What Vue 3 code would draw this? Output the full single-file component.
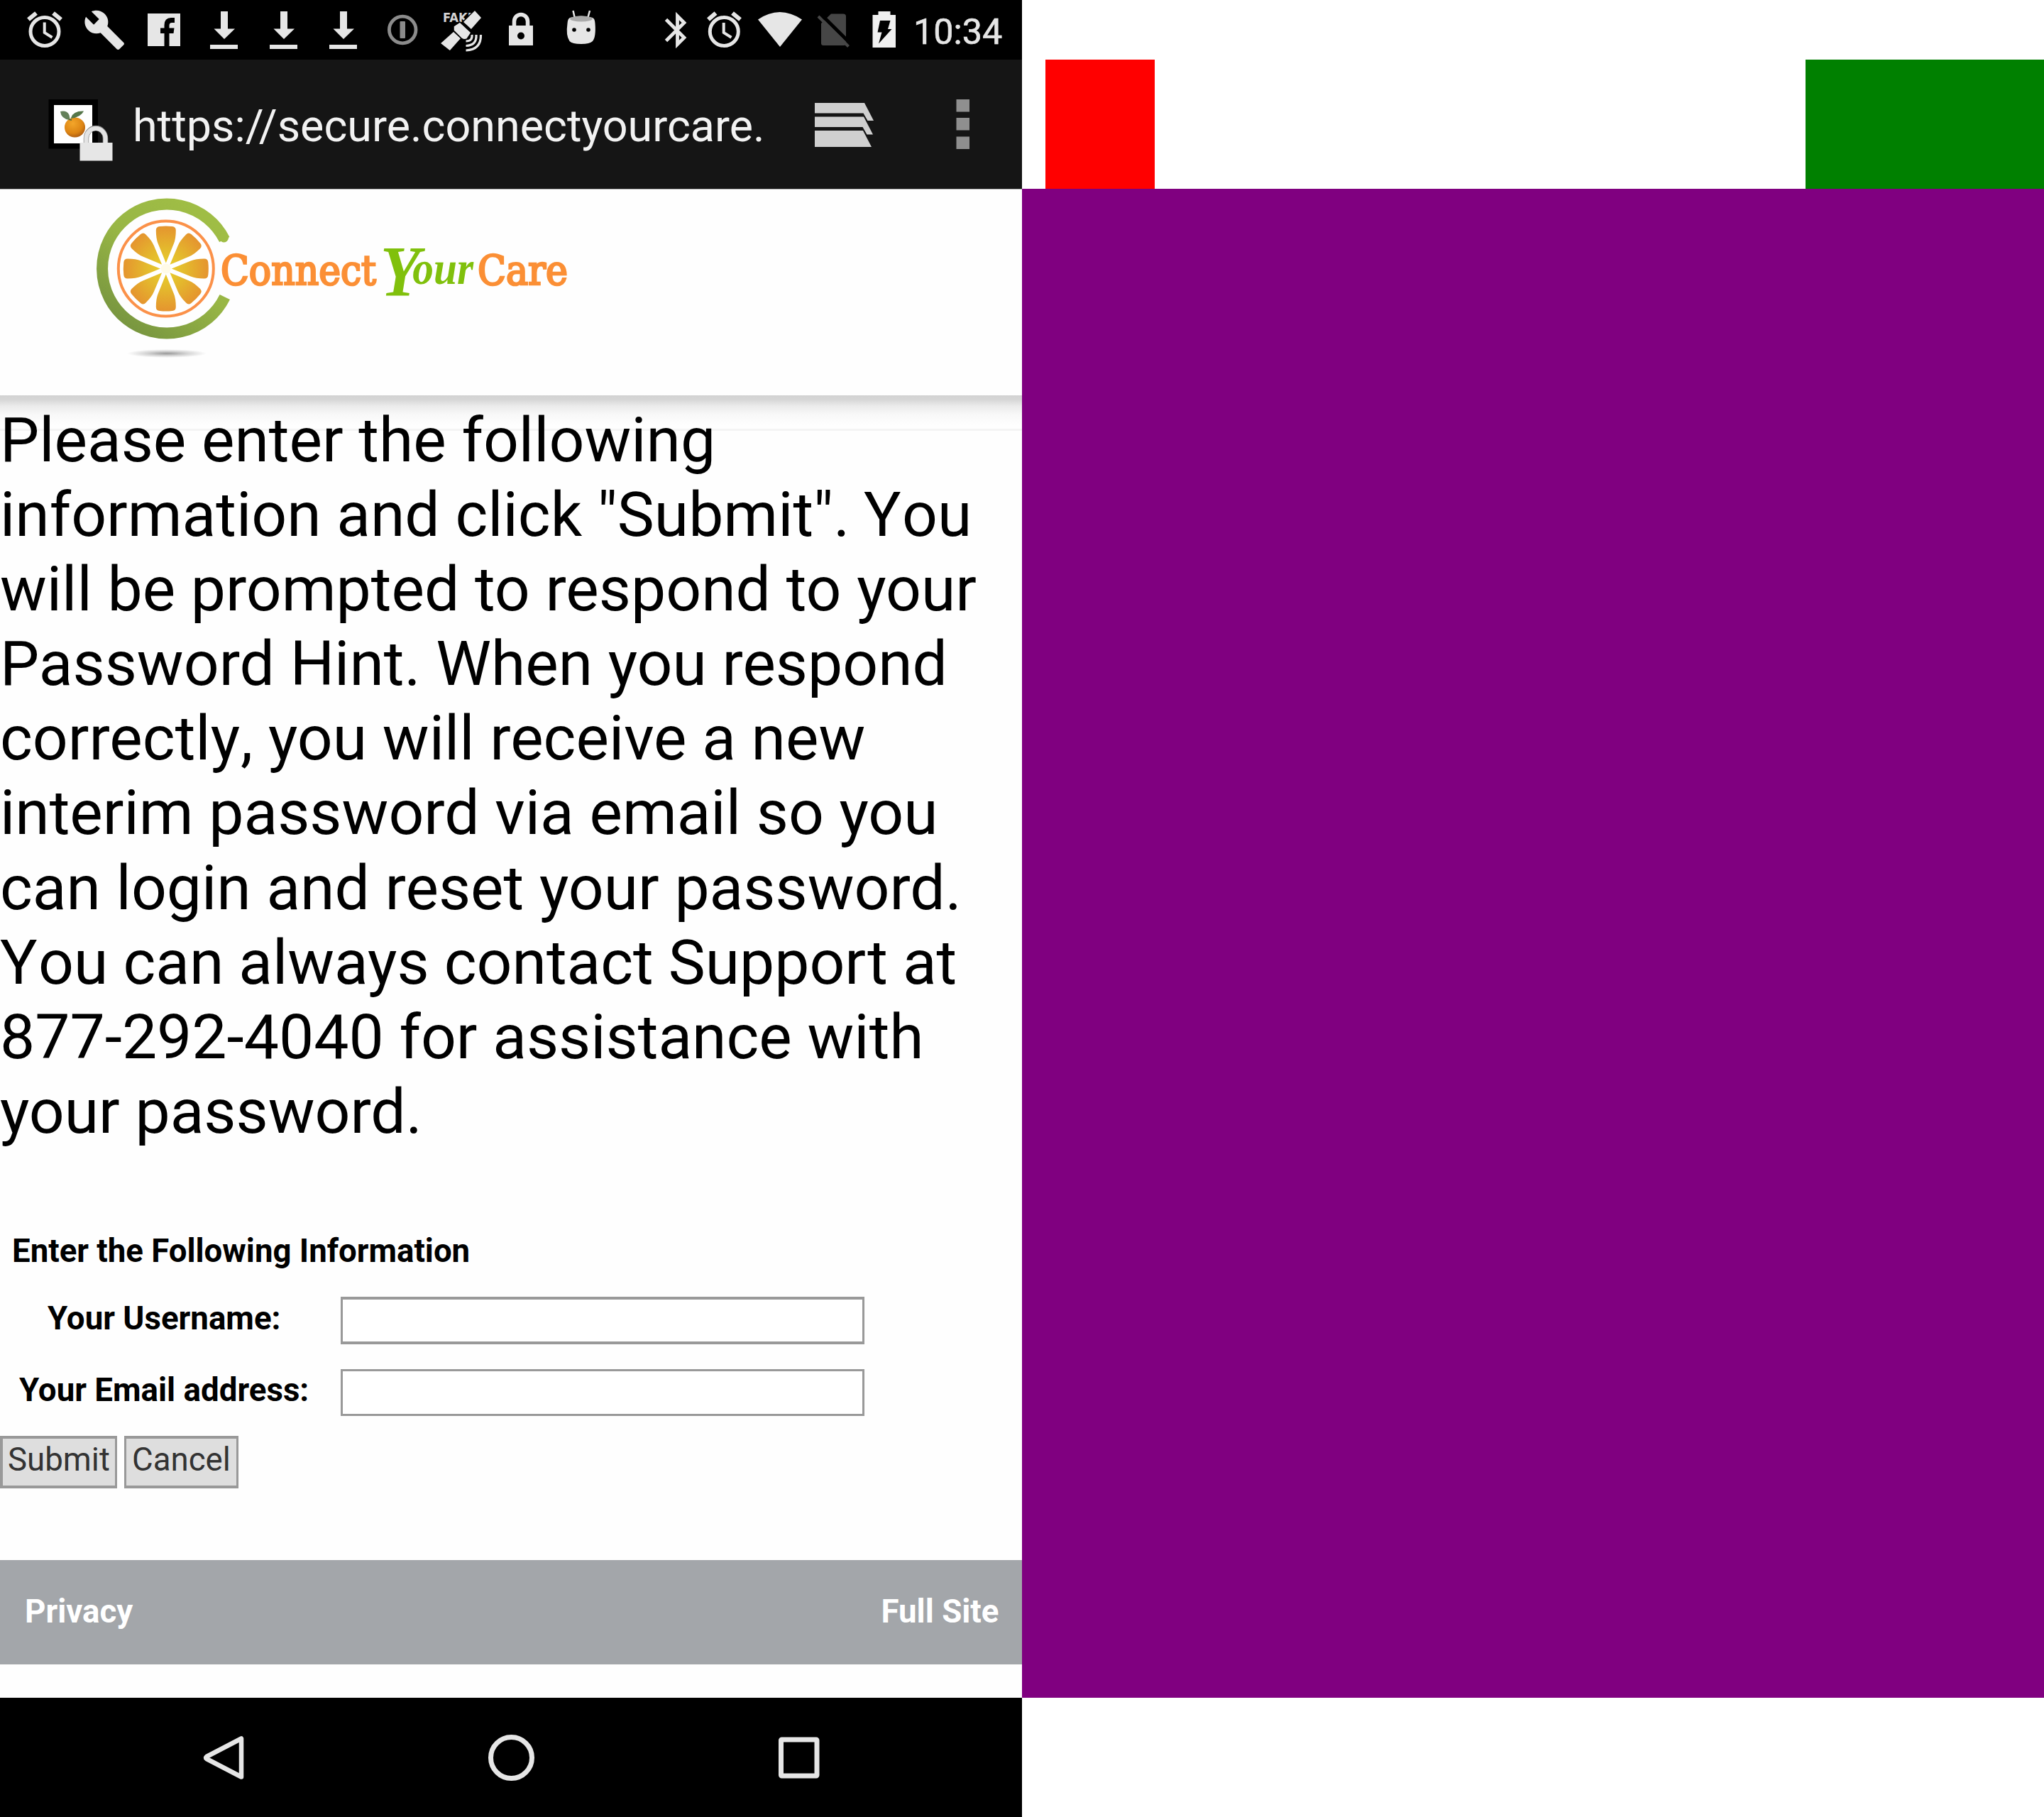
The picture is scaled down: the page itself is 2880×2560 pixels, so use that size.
<script setup>
const downloadSlots = [273, 357, 441]
const petals = [0, 45, 90, 135, 180, 225, 270, 315]
const fields = [
  { id: 'username', label: 'Your Username:' },
  { id: 'email', label: 'Your Email address:' }
]
</script>

<template>
  <div class="screen">
    <section class="phone">
      <header class="status">
        <div class="notifications">
          <svg viewBox="21 0 84 84" width="84" height="84">
            <g fill="none" stroke="#e6e6e6">
              <circle cx="63" cy="44.5" r="20" stroke-width="5" />
              <path d="M40 27.5L51 18.5M75 18.5L86 27.5" stroke-width="6" />
              <path d="M62.7 31.5V46L73.5 52.8" stroke-width="4" />
            </g>
          </svg>
          <svg viewBox="105 0 84 84" width="84" height="84">
            <path transform="translate(117 12) scale(2.52)" fill="#e6e6e6" d="M22.7 19l-9.1-9.1c.9-2.3.4-5-1.5-6.9-2-2-5-2.4-7.4-1.3L9 6 6 9 1.6 4.7C.4 7.1.9 10.1 2.9 12.1c1.9 1.9 4.6 2.4 6.9 1.5l9.1 9.1c.4.4 1 .4 1.4 0l2.3-2.3c.5-.4.5-1.1.1-1.4z" />
          </svg>
          <svg viewBox="189 0 84 84" width="84" height="84">
            <rect x="208" y="19" width="46" height="46" fill="#e6e6e6" />
            <path d="M231.5 66V47H226V39.5H231.5V35.500Q231.500 25 241 25H246V32H242Q238.500 32 238.500 36V39.500H245.500L244.500 47H238.500V66Z" />
          </svg>
          <svg v-for="x in downloadSlots" :key="x" viewBox="273 0 84 84" width="84" height="84">
            <path d="M311 16H321V40.500H331L316 55L301.500 40.500H311ZM296 63H335V69H296Z" fill="#e6e6e6" />
          </svg>
          <svg viewBox="525 0 84 84" width="84" height="84">
            <circle cx="567.2" cy="42" r="18.800" fill="none" stroke="#8c8c8c" stroke-width="4.800" />
            <rect x="563.500" y="30" width="7.500" height="24" rx="1" fill="#8c8c8c" />
          </svg>
          <svg viewBox="609 0 84 84" width="84" height="84">
            <text x="624" y="31" class="fake" textLength="46" lengthAdjust="spacingAndGlyphs">FAKE</text>
            <g fill="#e6e6e6" stroke="#000" stroke-width="1.500">
              <path d="M669 14L679 25L664 42L652 31Z" />
              <path d="M620 61L634 72L650 54L639 44Z" />
              <path d="M648 31L664 46L658 55Q654 57 650 54L639 43V37Z" />
            </g>
            <g fill="none" stroke="#e6e6e6" stroke-width="3.200">
              <path d="M665 49Q666 58 656.500 58M671 49Q672 64 656.500 64.500M677.500 49Q678 70 656.500 71" />
            </g>
          </svg>
          <svg viewBox="693 0 84 84" width="84" height="84">
            <path d="M724.500 38V30A9.500 9.500 0 0 1 743.500 30V38" fill="none" stroke="#e6e6e6" stroke-width="5.500" />
            <rect x="717" y="36" width="34" height="28" fill="#e6e6e6" />
            <circle cx="734" cy="50.500" r="5" />
          </svg>
          <svg viewBox="777 0 84 84" width="84" height="84">
            <path d="M807.500 15L810 26M831 15L828 26" stroke="#e6e6e6" stroke-width="2.500" />
            <path d="M803 25Q819 20 835 25Q838 26 838.500 33Q840 52 835 58Q831 62 819 62Q806 62 802.500 58Q797 50 799.500 33Q800 26 803 25Z" fill="#e6e6e6" />
            <ellipse cx="819" cy="26.500" rx="16" ry="4" fill="#aaa" />
            <circle cx="809" cy="42" r="2.800" />
            <circle cx="829" cy="42" r="2.800" />
          </svg>
        </div>
        <div class="system">
          <svg viewBox="924 0 56 84" width="56" height="84">
            <path d="M938.500 27.500L964 53L954.500 62.500V22.500L964 32L938.500 57.500" fill="none" stroke="#e6e6e6" stroke-width="4.800" />
          </svg>
          <svg viewBox="23 0 80 84" width="80" height="84">
            <g fill="none" stroke="#e6e6e6">
              <circle cx="63.300" cy="44.500" r="20" stroke-width="5" />
              <path d="M41 27.500L51.500 18.500M75 18.500L86 27.500" stroke-width="6" />
              <path d="M62.700 32V46L73.500 52.800" stroke-width="4" />
            </g>
          </svg>
          <svg viewBox="1060 0 80 84" width="80" height="84">
            <path d="M1099 66L1068 27.500Q1098.500 6.500 1130 27.500Z" fill="#e6e6e6" />
          </svg>
          <svg viewBox="1140 0 70 84" width="70" height="84">
            <path d="M1171 19.500H1188Q1192 19.500 1192 23V61Q1192 64 1189 64H1160Q1157 64 1157 61V33Z" fill="#464646" />
            <path d="M1156.500 20L1200 63" stroke="#000" stroke-width="5" />
            <path d="M1153 23L1195.500 65.500" stroke="#464646" stroke-width="4" />
          </svg>
          <svg viewBox="1210 0 70 84" width="70" height="84">
            <path d="M1237.500 16H1254.500V21H1262V67H1229.500V21H1237.500Z" fill="#f0f0f0" />
            <path d="M1240 29H1254.500L1251 41H1256.500L1238 61.500L1242.500 45.500H1236.500Z" />
          </svg>
          <span class="clock">10:34</span>
        </div>
      </header>

      <div class="toolbar">
        <svg class="favicon" viewBox="60 130 120 110" width="120" height="110">
          <defs>
            <radialGradient id="fruit" cx=".4" cy=".3" r=".75">
              <stop offset="0" stop-color="#f3a62a" />
              <stop offset=".65" stop-color="#dd8514" />
              <stop offset="1" stop-color="#a85812" />
            </radialGradient>
          </defs>
          <rect x="68.500" y="140" width="69.500" height="69.500" />
          <rect x="76" y="148" width="54" height="54" fill="#fff" />
          <ellipse cx="105.500" cy="179.500" rx="14.500" ry="14" fill="url(#fruit)" />
          <path d="M85 157Q94 155 97.500 162Q99 166 97.500 169Q86 167 85 157Z" fill="#64805a" />
          <path d="M100 166Q103 156 118 156.500Q114 165 100 167Z" fill="#55764a" />
          <path d="M97 168L101 169" stroke="#5a6b3a" stroke-width="2" />
          <path d="M121.500 203V195A13.500 14.500 0 0 1 148.500 195V203" fill="none" stroke="#8b8b8b" stroke-width="7.500" />
          <path d="M121.500 203V195A13.500 14 0 0 1 148.500 195V203" fill="none" stroke="#e4e4e4" stroke-width="6" />
          <rect x="112.500" y="201" width="46" height="25.500" fill="#e6e6e6" />
        </svg>
        <span class="url">https://secure.connectyourcare.</span>
        <svg class="tabs" viewBox="1140 130 100 90" width="100" height="90">
          <path d="M1148 145H1218L1231 170H1222.500L1216.500 159.500H1148ZM1148 164.500H1217L1230 189.500H1221.500L1215.500 179H1148ZM1148 184H1216L1228 207H1148Z" fill="#cfcfcf" />
        </svg>
        <svg class="more" viewBox="1330 130 50 90" width="50" height="90">
          <path d="M1347.500 140H1366V157.500H1347.500ZM1347.500 166H1366V183.500H1347.500ZM1347.500 192.500H1366V210H1347.500Z" fill="#8f8f8f" />
        </svg>
      </div>

      <main class="page">
        <div class="brand">
          <svg class="logo" viewBox="120 267 700 240" width="700" height="240">
            <defs>
              <linearGradient id="ring" x1="0" y1="1" x2=".7" y2="0">
                <stop offset=".1" stop-color="#76943f" />
                <stop offset=".6" stop-color="#98b645" />
                <stop offset="1" stop-color="#9fbd45" />
              </linearGradient>
              <radialGradient id="pulp" gradientUnits="userSpaceOnUse" cx="0" cy="0" r="62">
                <stop offset="0" stop-color="#e9d22c" />
                <stop offset=".45" stop-color="#e4b92d" />
                <stop offset="1" stop-color="#e5922f" />
              </radialGradient>
              <radialGradient id="shade">
                <stop offset="0" stop-color="#000" stop-opacity=".4" />
                <stop offset=".5" stop-color="#000" stop-opacity=".17" />
                <stop offset="1" stop-color="#000" stop-opacity="0" />
              </radialGradient>
            </defs>
            <path d="M315.500 337.500A91 91 0 1 0 316 418.500" transform="translate(.8 0)" fill="none" stroke="url(#ring)" stroke-width="16" />
            <circle cx="315.500" cy="335" r="6.500" fill="#9fbd45" />
            <circle cx="233.800" cy="378.500" r="67" fill="#fff" stroke="#fb9149" stroke-width="4" />
            <g transform="translate(233.800 378.500)">
              <path
                v-for="angle in petals"
                :key="angle"
                :transform="`rotate(${angle})`"
                d="M0 -8L-11 -35Q-14 -42 -14 -54Q-14 -59 -9 -59.500Q0 -60.500 9 -59.500Q14 -59 14 -54Q14 -42 11 -35Z"
                fill="url(#pulp)"
              />
              <circle r="7" fill="#fffbe8" />
            </g>
            <ellipse cx="235" cy="498" rx="56" ry="6" fill="url(#shade)" />
            <text class="slab" x="311" y="401" textLength="219" lengthAdjust="spacingAndGlyphs">Connect</text>
            <text class="script" x="536" y="417" textLength="131" lengthAdjust="spacingAndGlyphs"><tspan font-size="102">Y</tspan><tspan font-size="66" dx="-12" dy="-17">our</tspan></text>
            <text class="slab" x="673" y="401" textLength="127" lengthAdjust="spacingAndGlyphs">Care</text>
          </svg>
        </div>

        <div class="content">
          <p class="intro">
            Please enter the following<br />
            information and click "Submit". <span class="lead tight">Y</span>ou<br />
            will be prompted to respond to your<br />
            Password Hint. When you respond<br />
            correctl<span class="comma">y</span>, you will receive a new<br />
            interim password via email so you<br />
            can login and reset your password.<br />
            <span class="squeeze"><span class="lead">Y</span>ou can always contact Support at</span><br />
            877-292-4040 for assistance with<br />
            your password.
          </p>
          <h2>Enter the Following Information</h2>
          <div v-for="f in fields" :key="f.id" class="row" :class="f.id">
            <label :for="f.id">{{ f.label }}</label>
            <input :id="f.id" type="text" />
          </div>
          <div class="actions">
            <button class="submit" type="button">Submit</button>
            <button class="cancel" type="button">Cancel</button>
          </div>
        </div>

        <footer>
          <span>Privacy</span>
          <span>Full Site</span>
        </footer>
      </main>

      <nav>
        <svg viewBox="284 2440 64 72" width="64" height="72">
          <path d="M340 2449.500V2503.500L291 2478Q289 2476.500 291 2475Z" fill="none" stroke="#e6e6e6" stroke-width="6.500" stroke-linejoin="round" />
        </svg>
        <svg viewBox="684 2440 72 72" width="72" height="72">
          <circle cx="720.500" cy="2476.500" r="29" fill="none" stroke="#e6e6e6" stroke-width="7" />
        </svg>
        <svg viewBox="1092 2440 68 72" width="68" height="72">
          <rect x="1100.500" y="2451" width="50.500" height="51" rx="1" fill="none" stroke="#e6e6e6" stroke-width="7" stroke-linejoin="round" />
        </svg>
      </nav>
    </section>

    <section class="panel">
      <div class="panel-head">
        <div class="red"></div>
        <div class="green"></div>
      </div>
      <div class="purple"></div>
    </section>
  </div>
</template>

<style>
body {
  margin: 0;
  background: #fff;
}
</style>

<style scoped>
.screen {
  display: flex;
  width: 2880px;
  height: 2560px;
  overflow: hidden;
  font-family: Roboto, sans-serif;
}
svg {
  display: block;
  flex: none;
}
.phone {
  width: 1440px;
  display: flex;
  flex-direction: column;
}
.status {
  display: flex;
  height: 84px;
  background: #000;
  padding-left: 21px;
}
.notifications {
  display: flex;
  width: 903px;
}
.system {
  display: flex;
}
.clock {
  margin-left: 7px;
  font-size: 50.3px;
  line-height: 89px;
  color: #e6e6e6;
  -webkit-text-stroke: 0.6px #e6e6e6;
}
.fake {
  font: bold 18px "DejaVu Sans", sans-serif;
  fill: #d4d4d4;
}
.toolbar {
  display: flex;
  height: 182px;
  background: #151515;
}
.favicon {
  margin: 46px 0 0 60px;
}
.url {
  width: 952.5px;
  padding-left: 7px;
  font-size: 62.85px;
  line-height: 187px;
  color: #f2f2f2;
  white-space: nowrap;
  flex: none;
}
.tabs {
  margin-top: 46px;
}
.more {
  margin: 46px 0 0 90px;
}
.page {
  display: flex;
  flex-direction: column;
  height: 2126px;
  box-sizing: border-box;
  border-top: 1px solid #b0b0b0;
  background: #fefefe;
}
.brand {
  height: 290px;
  padding-left: 120px;
}
.slab {
  font-family: "DejaVu Serif Condensed", "DejaVu Serif", serif;
  font-size: 58px;
  fill: #fb8f35;
  stroke: #fb8f35;
  stroke-width: 2.6px;
}
.script {
  font-family: "Liberation Serif", serif;
  font-style: italic;
  font-weight: bold;
  fill: #80c00c;
}
.content {
  height: 1641px;
  box-sizing: border-box;
  padding-top: 11px;
  background:
    linear-gradient(#f4f4f4, #f4f4f4) 0 47px / 100% 3px no-repeat,
    linear-gradient(#d2d2d2, #d6d6d6 6px, #ebebeb 15px, #f8f8f8 27px, #fefefe 42px) 0 0 / 100% 46px no-repeat;
}
.intro {
  margin: 0;
  font-size: 87.6px;
  line-height: 105.1px;
  color: #000;
  white-space: nowrap;
}
.lead {
  letter-spacing: 1.5px;
}
.tight {
  margin-left: -2px;
}
.comma {
  letter-spacing: 1px;
}
.squeeze {
  word-spacing: -0.7px;
}
h2 {
  margin: 114.5px 0 0;
  padding-left: 17px;
  font-size: 45.6px;
  line-height: 60px;
  font-weight: 700;
}
.row {
  display: flex;
  height: 67px;
  margin-top: 34px;
}
.row label {
  width: 480px;
  box-sizing: border-box;
  padding-left: 27px;
  font-size: 45.7px;
  line-height: 60px;
  font-weight: 700;
}
.row.username label {
  padding-left: 67px;
  line-height: 61px;
}
.row input {
  width: 738px;
  height: 67px;
  box-sizing: border-box;
  padding: 0 8px;
  border: solid #999;
  border-width: 4px 3px;
  background: #fff;
  font: 45px Roboto, sans-serif;
  border-radius: 0;
}
.row.email {
  margin-top: 35px;
}
.row.email input {
  height: 66px;
  border-width: 3px;
}
.actions {
  display: flex;
  gap: 10px;
  margin-top: 27px;
}
button {
  height: 74px;
  box-sizing: border-box;
  margin: 0;
  padding: 0 0 6px 7px;
  border: solid #999;
  border-width: 4px 3px;
  border-radius: 0;
  background: #dedede;
  color: #333;
  font: 45.6px/60px Roboto, sans-serif;
  text-align: left;
}
.submit {
  width: 165px;
  border-left-width: 4px;
}
.cancel {
  width: 161px;
  padding-left: 8px;
}
footer {
  display: flex;
  justify-content: space-between;
  height: 147px;
  box-sizing: border-box;
  padding: 42.5px 32.5px 0 35px;
  background: #a3a6aa;
  color: #fff;
  font-size: 45.7px;
  line-height: 60px;
  font-weight: 700;
}
nav {
  display: flex;
  align-items: flex-start;
  height: 168px;
  box-sizing: border-box;
  padding: 48px 280px 0 284px;
  justify-content: space-between;
  background: #000;
}
.panel {
  width: 1440px;
}
.panel-head {
  display: flex;
  justify-content: space-between;
  margin-top: 84px;
  padding-left: 33px;
  height: 182px;
}
.red {
  width: 154px;
  background: red;
}
.green {
  width: 336px;
  background: green;
}
.purple {
  height: 2126px;
  background: purple;
}
</style>
